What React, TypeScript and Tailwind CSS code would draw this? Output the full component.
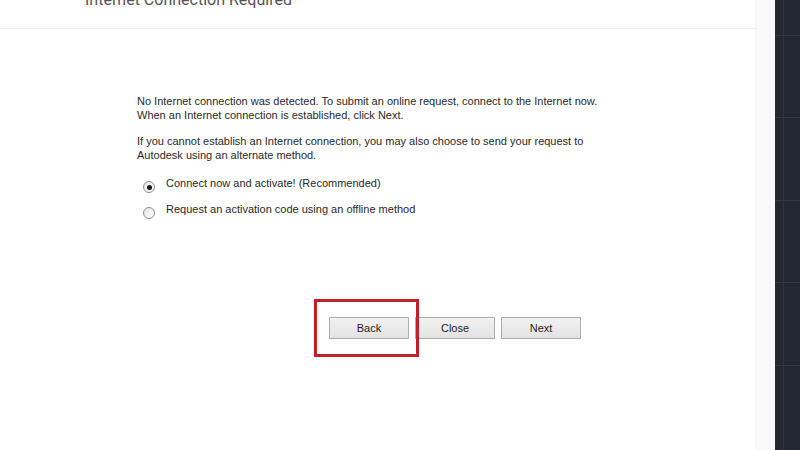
import React from "react";

const blocks = [35, 82, 83, 82, 83, 85];

function Radio({ checked }: { checked?: boolean }) {
  return (
    <span className="mt-[4px] flex h-[12px] w-[12px] shrink-0 items-center justify-center rounded-full border border-[#8e8f8f] bg-gradient-to-br from-[#e6e6e6] to-[#ffffff]">
      {checked && <span className="h-[5px] w-[5px] rounded-full bg-[#1a1a1a]" />}
    </span>
  );
}

function Btn({ label }: { label: string }) {
  return (
    <button className="flex h-[22px] w-[80px] items-center justify-center border border-[#adadad] bg-gradient-to-b from-[#f2f2f2] to-[#e2e2e2] text-[11px] text-[#1e1e1e]">
      {label}
    </button>
  );
}

function DarkCol({ className }: { className: string }) {
  return (
    <div className={className}>
      {blocks.map((h, i) => (
        <div
          key={i}
          style={{ height: h }}
          className={i === 0 ? "" : "border-t border-[#343945]"}
        />
      ))}
    </div>
  );
}

export default function App() {
  return (
    <div className="flex h-[450px] w-[800px] overflow-hidden bg-white font-['Liberation_Sans',Arial,sans-serif]">
      <div className="flex w-[755px] flex-col bg-white">
        <div className="h-[29px] border-b border-[#f0f0f0] pl-[85px]">
          <div className="-mt-[8px] font-['Roboto',sans-serif] text-[16px] leading-[16px] text-[#555555]">
            Internet Connection Required
          </div>
        </div>
        <div className="relative flex flex-1 flex-col pl-[137px] pt-[65px] text-[11px] leading-[14px] text-[#2a2a2a]">
          <p>
            No Internet connection was detected. To submit an online request, connect to the Internet now.
            <br />
            When an Internet connection is established, click Next.
          </p>
          <p className="mt-[12px]">
            If you cannot establish an Internet connection, you may also choose to send your request to
            <br />
            Autodesk using an alternate method.
          </p>
          <div className="mt-[15px] flex flex-col gap-[10px] pl-[6px]">
            <label className="flex h-[16px] items-center gap-[11px]">
              <Radio checked />
              <span className="-mt-[4px]">Connect now and activate! (Recommended)</span>
            </label>
            <label className="flex h-[16px] items-center gap-[11px]">
              <Radio />
              <span className="-mt-[4px]">Request an activation code using an offline method</span>
            </label>
          </div>
          <div className="relative ml-[192px] mt-[98px] flex gap-[6px]">
            <Btn label="Back" />
            <Btn label="Close" />
            <Btn label="Next" />
            <div className="absolute left-[-15px] top-[-18px] h-[58px] w-[105px] border-[3px] border-[#c41f28]" />
          </div>
        </div>
      </div>
      <div className="w-[20px] border-l border-[#f3f3f4] bg-[#f9f9fa]" />
      <div className="flex flex-1 bg-[#222731]">
        <DarkCol className="w-[9px] border-r border-[#2f343e]" />
        <DarkCol className="flex-1" />
      </div>
    </div>
  );
}
